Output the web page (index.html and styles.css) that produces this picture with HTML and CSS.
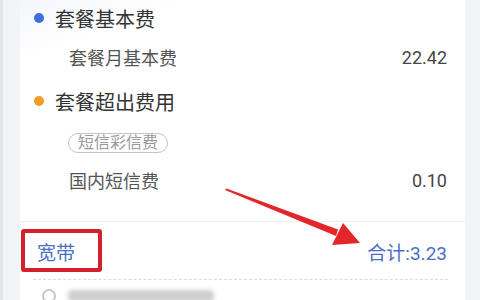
FILE: index.html
```html
<!DOCTYPE html>
<html lang="zh">
<head>
    <meta charset="UTF-8">
    <meta name="viewport" content="width=device-width, initial-scale=1.0">
    <title>账单详情</title>
    <link rel="stylesheet" href="styles.css">
</head>
<body>
    <div class="page">
        <div class="card">
            <div class="group">
                <div class="group-title"><span class="dot dot-blue"></span>套餐基本费</div>
                <div class="fee-row">
                    <span>套餐月基本费</span>
                    <span class="fee-value">22.42</span>
                </div>
            </div>

            <div class="group group-last">
                <div class="group-title"><span class="dot dot-orange"></span>套餐超出费用</div>
                <div class="tag-wrap"><span class="tag">短信彩信费</span></div>
                <div class="fee-row">
                    <span>国内短信费</span>
                    <span class="fee-value">0.10</span>
                </div>
            </div>

            <div class="total-row">
                <span class="total-name">宽带</span>
                <span class="total-sum">合计:3.23</span>
                <div class="mark-box"></div>
            </div>

            <div class="next-row">
                <span class="next-icon"></span>
                <span class="next-blur"></span>
            </div>

            <!-- 标注箭头 -->
            <svg class="mark-arrow" width="480" height="300" viewBox="0 0 480 300">
                <polygon points="225,190 226.5,188.5 338,229.5 336,236" fill="#e3262a"/>
                <polygon points="360,243 332,245 343,223" fill="#e3262a"/>
            </svg>
        </div>
    </div>
</body>
</html>
```

FILE: styles.css
```css
body {
    margin: 0;
    font-family: Roboto, "Noto Sans CJK SC", sans-serif;
    background: #f3f4f8;
}
.page {
    height: 300px;
    overflow: hidden;
    border-left: 3px solid #e4e5ea;
    padding-left: 17px;
    padding-right: 15px;
}
.card {
    position: relative;
    background: linear-gradient(160deg, #f4f6fc 0, #ffffff 60px) no-repeat;
    background-color: #fff;
    height: 300px;
}
.group {
    padding-top: 4px;
}
.group + .group {
    padding-top: 17px;
}
.group-last {
    padding-bottom: 28px;
}
.group-title {
    display: flex;
    align-items: center;
    height: 28px;
    padding-left: 14px;
    font-size: 20px;
    color: #333;
}
.dot {
    width: 10px;
    height: 10px;
    border-radius: 50%;
    margin-right: 11px;
}
.dot-blue {
    background: #3f6ee0;
}
.dot-orange {
    background: #f49a26;
}
.fee-row {
    display: flex;
    justify-content: space-between;
    align-items: center;
    height: 26px;
    margin-top: 12px;
    padding-left: 49px;
    padding-right: 18px;
    font-size: 18px;
    color: #555;
}
.fee-value {
    color: #444;
}
.tag-wrap {
    margin-top: 18px;
    padding-left: 48px;
    height: 20px;
}
.tag {
    display: inline-block;
    box-sizing: border-box;
    height: 20px;
    line-height: 18px;
    padding: 0 9px;
    border: 1px solid #c4c4c4;
    border-radius: 10px;
    font-size: 16px;
    color: #9a9a9a;
}
.tag-wrap + .fee-row {
    margin-top: 14px;
}
.total-row {
    position: relative;
    display: flex;
    justify-content: space-between;
    align-items: center;
    height: 58px;
    border-top: 1px solid #eeeeee;
    padding: 0 18px 0 17px;
    font-size: 19px;
    color: #4d6ec5;
}
.total-row::after {
    content: "";
    position: absolute;
    left: 13px;
    right: 17px;
    bottom: 0;
    border-bottom: 1px dashed #dcdcdc;
}
.mark-box {
    position: absolute;
    left: 1px;
    top: 7px;
    width: 81px;
    height: 43px;
    box-sizing: border-box;
    border: 4px solid #d4202c;
    border-radius: 3px;
}
.next-row {
    display: flex;
    align-items: center;
    gap: 12px;
    padding: 9px 0 0 22px;
}
.next-icon {
    width: 10px;
    height: 10px;
    border: 2px solid #c8c8c8;
    border-radius: 50%;
}
.next-blur {
    width: 146px;
    height: 12px;
    background: #cfcfcf;
    border-radius: 4px;
    filter: blur(2px);
}
.mark-arrow {
    position: absolute;
    left: -20px;
    top: 0;
    pointer-events: none;
}
```
